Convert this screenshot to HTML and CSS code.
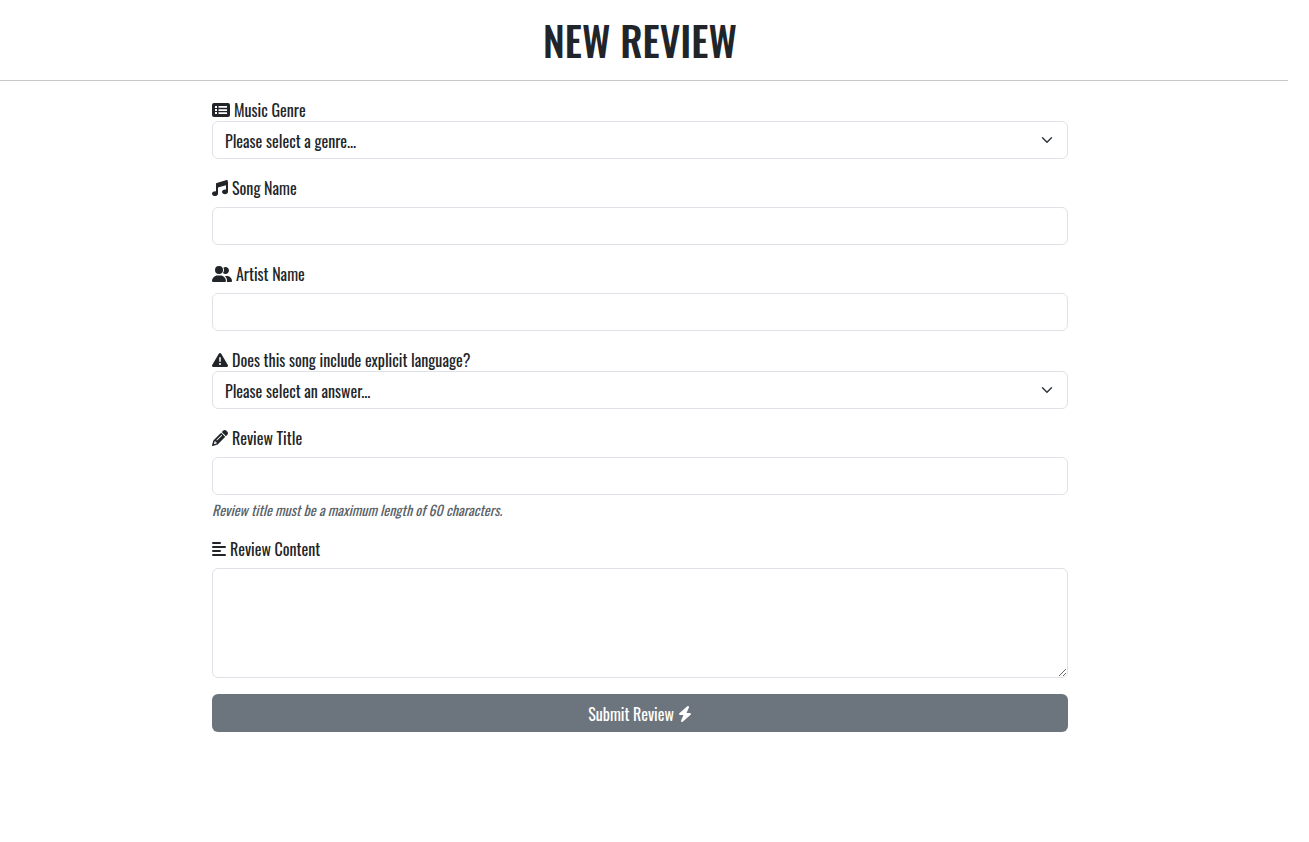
FILE: index.html
```
<!DOCTYPE html>
<html lang="en">
<head>
<meta charset="utf-8">
<meta name="viewport" content="width=device-width, initial-scale=1">
<title>New Review</title>
<link rel="stylesheet" href="styles.css">
</head>
<body>
<header class="page-header">
  <h1 class="page-title">NEW REVIEW</h1>
</header>
<main class="page-main">
  <form class="review-form">
    <div class="field field-tight">
      <label class="label" for="genre">
        <svg class="icon icon-wide" viewBox="0 0 576 512" aria-hidden="true"><path fill-rule="evenodd" d="M64 32h448a64 64 0 0 1 64 64v320a64 64 0 0 1-64 64H64a64 64 0 0 1-64-64V96a64 64 0 0 1 64-64zM96 128v64h64v-64zM96 224v64h64v-64zM96 320v64h64v-64zM208 128v56h272v-56zM208 228v56h272v-56zM208 328v56h272v-56z"/></svg>
        <span>Music Genre</span>
      </label>
      <select class="control select" id="genre"><option>Please select a genre...</option></select>
    </div>
    <div class="field">
      <label class="label" for="song">
        <svg class="icon" viewBox="0 0 512 512" aria-hidden="true"><path d="M499.100 6.300c8.100 6 12.900 15.600 12.900 25.700v336c0 44.200-43 80-96 80s-96-35.800-96-80 43-80 96-80c11.200 0 22 1.600 32 4.600V147L192 223.800V432c0 44.200-43 80-96 80S0 476.200 0 432s43-80 96-80c11.200 0 22 1.600 32 4.600V96c0-14.100 9.300-26.600 22.800-30.700l320-96c9.700-2.900 20.200-1.100 28.300 5z" transform="translate(0 32) scale(1 .94)"/></svg>
        <span>Song Name</span>
      </label>
      <input class="control" id="song" type="text">
    </div>
    <div class="field">
      <label class="label" for="artist">
        <svg class="icon icon-people" viewBox="0 0 640 512" aria-hidden="true"><path d="M96 128a128 128 0 1 1 256 0A128 128 0 1 1 96 128zM0 482.300C0 383.800 79.800 304 178.300 304h91.400C368.200 304 448 383.800 448 482.300c0 16.400-13.300 29.700-29.700 29.700H29.700C13.300 512 0 498.700 0 482.300zM609.300 512H471.400c5.400-9.400 8.600-20.300 8.600-32v-8c0-60.700-27.100-115.200-69.800-151.800 2.400-.1 4.700-.2 7.100-.2h61.400C567.800 320 640 392.200 640 481.300c0 17-13.800 30.700-30.700 30.700zM432 256c-31 0-59-12.600-79.300-32.900C372.400 196.500 384 163.600 384 128c0-26.800-6.600-52.100-18.300-74.300C384.300 40.100 407.200 32 432 32c61.900 0 112 50.100 112 112s-50.100 112-112 112z"/></svg>
        <span>Artist Name</span>
      </label>
      <input class="control" id="artist" type="text">
    </div>
    <div class="field field-tight">
      <label class="label" for="explicit">
        <svg class="icon" viewBox="0 0 512 512" aria-hidden="true"><path fill-rule="evenodd" d="M256 32c14.200 0 27.300 7.500 34.500 19.800l216 368c7.300 12.400 7.300 27.700.2 40.100S486.300 480 472 480H40c-14.300 0-27.600-7.700-34.700-20.100s-7-27.800.2-40.100l216-368C228.700 39.500 241.800 32 256 32zm0 128c-13.300 0-24 10.700-24 24v112a24 24 0 0 0 48 0V184c0-13.300-10.700-24-24-24zm32 224a32 32 0 1 0-64 0 32 32 0 1 0 64 0z"/></svg>
        <span>Does this song include explicit language?</span>
      </label>
      <select class="control select" id="explicit"><option>Please select an answer...</option></select>
    </div>
    <div class="field">
      <label class="label" for="title">
        <svg class="icon" viewBox="0 0 512 512" aria-hidden="true"><path fill-rule="evenodd" d="M410.300 231l11.300-11.300-33.900-33.900-62.100-62.100-33.900-33.900-11.300 11.300-22.600 22.600L58.600 322.900c-10.400 10.400-18 23.300-22.200 37.400L1 480.700c-2.500 8.400-.2 17.500 6.100 23.700s15.300 8.500 23.700 6.100l120.300-35.400c14.100-4.200 27-11.800 37.400-22.200L387.700 253.700zM160 399.400l-9.100 22.700c-4 3.100-8.500 5.400-13.300 6.900L59.400 452l23-78.100c1.400-4.900 3.800-9.400 6.900-13.300l22.700-9.100v32c0 8.800 7.200 16 16 16zM362.700 18.700L314.300 67.100l33.900 33.900 62.100 62.100 33.900 33.900 48.400-48.400c25-25 25-65.500 0-90.500l-39.400-39.400c-25-25-65.500-25-90.500 0zm-47.400 168l-144 144c-6.200 6.200-16.400 6.200-22.600 0s-6.200-16.400 0-22.600l144-144c6.200-6.200 16.400-6.200 22.600 0s6.200 16.400 0 22.600z"/></svg>
        <span>Review Title</span>
      </label>
      <input class="control" id="title" type="text" maxlength="60" aria-describedby="title-help">
      <p class="help" id="title-help">Review title must be a maximum length of 60 characters.</p>
    </div>
    <div class="field">
      <label class="label" for="content">
        <svg class="icon icon-lines" viewBox="0 0 448 512" aria-hidden="true"><path d="M288 64a32 32 0 0 1-32 32H32a32 32 0 0 1 0-64h224a32 32 0 0 1 32 32zm0 256a32 32 0 0 1-32 32H32a32 32 0 0 1 0-64h224a32 32 0 0 1 32 32zM0 192a32 32 0 0 1 32-32h384a32 32 0 0 1 0 64H32a32 32 0 0 1-32-32zm448 256a32 32 0 0 1-32 32H32a32 32 0 0 1 0-64h384a32 32 0 0 1 32 32z"/></svg>
        <span>Review Content</span>
      </label>
      <textarea class="control textarea" id="content"></textarea>
    </div>
    <button class="submit" type="submit">
      <span>Submit Review</span>
      <svg class="icon icon-lines" viewBox="0 0 448 512" aria-hidden="true"><path d="M349.400 44.600c5.900-13.700 1.500-29.700-10.600-38.500s-28.600-8-39.900 1.800l-256 224c-10 8.800-13.600 22.900-8.900 35.300S50.700 288 64 288h111.500L98.600 467.400c-5.900 13.700-1.500 29.700 10.600 38.500s28.600 8 39.900-1.800l256-224c10-8.800 13.600-22.900 8.900-35.300S397.300 224 384 224H272.500z"/></svg>
    </button>
  </form>
</main>
</body>
</html>
```
FILE: styles.css
```
* {
  box-sizing: border-box;
}

body {
  margin: 0;
  background: #fff;
  color: #212529;
  font-family: Oswald, "Liberation Sans Narrow", "DejaVu Sans Condensed", sans-serif;
  font-size: 16px;
  font-weight: 400;
  line-height: 24px;
}

.page-header {
  margin-right: 21px;
  padding: 16px 8px 16px 0;
  border-bottom: 1px solid #c8c9ca;
}

.page-title {
  margin: 0;
  font-size: 40px;
  font-weight: 500;
  line-height: 48px;
  text-align: center;
}

.page-main {
  display: flex;
  justify-content: center;
  padding: 16px 29px 16px 0;
}

.review-form {
  display: flex;
  flex-direction: column;
  gap: 16px;
  width: 100%;
  max-width: 856px;
}

.field {
  display: flex;
  flex-direction: column;
}

.label {
  display: flex;
  align-items: center;
  align-self: flex-start;
  gap: 4px;
  margin-bottom: 7px;
  padding-top: 1px;
}

.field-tight .label {
  margin-bottom: -1px;
}

.icon {
  flex: none;
  width: 16px;
  height: 16px;
  fill: currentColor;
}

.icon-wide {
  width: 18px;
}

.icon-people {
  width: 20px;
}

.icon-lines {
  width: 14px;
}

.control {
  display: block;
  width: 100%;
  height: 38px;
  margin: 0;
  padding: 7px 12px 5px;
  border: 1px solid #dee2e6;
  border-radius: 6px;
  background-color: #fff;
  color: inherit;
  font: inherit;
}

.select {
  appearance: none;
  padding-right: 36px;
  background-image: url("data:image/svg+xml,%3csvg xmlns='http://www.w3.org/2000/svg' viewBox='0 0 16 16'%3e%3cpath fill='none' stroke='%23343a40' stroke-linecap='round' stroke-linejoin='round' stroke-width='2' d='m2 5 6 6 6-6'/%3e%3c/svg%3e");
  background-repeat: no-repeat;
  background-position: right 14px center;
  background-size: 12px 12px;
}

.textarea {
  height: 110px;
  resize: vertical;
}

.help {
  margin: 4px 0 0;
  color: #5a6167;
  font-size: 14px;
  font-style: italic;
  line-height: 21px;
}

.submit {
  display: flex;
  align-items: center;
  justify-content: center;
  gap: 4px;
  width: 100%;
  padding: 8px 12px 6px;
  border: 0;
  border-radius: 6px;
  background: #6c757d;
  color: #fff;
  font: inherit;
}
```
